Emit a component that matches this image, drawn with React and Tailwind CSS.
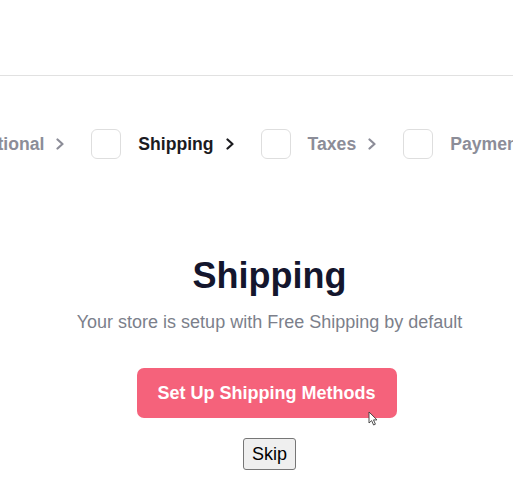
import React from "react";

const steps = [
  { label: "Optional", active: false },
  { label: "Shipping", active: true },
  { label: "Taxes", active: false },
  { label: "Payments", active: false },
];

const Chevron = ({ active }) => (
  <svg width="8" height="12" viewBox="0 0 8 12" fill="none" className="shrink-0">
    <path
      d="M1.5 1.5 L6.5 6 L1.5 10.5"
      stroke={active ? "#1b1b1f" : "#8c8d98"}
      strokeWidth="2.2"
      strokeLinecap="round"
      strokeLinejoin="round"
    />
  </svg>
);

const App = () => {
  return (
    <div className="min-h-screen bg-white overflow-hidden font-['Liberation_Sans',Arial,sans-serif]">
      <div className="h-[76px] border-b border-[#e1e1e1]" />

      {/* step bar */}
      <div className="mt-[53px] overflow-hidden">
        <div className="flex items-center whitespace-nowrap ml-[-74px]">
          {steps.map((step, i) => (
            <div key={step.label} className="flex items-center shrink-0">
              <div className="w-[30px] h-[30px] rounded-[6px] border border-[#dedede] bg-white shrink-0" />
              <span
                className={`ml-[17px] text-[17.6px] font-bold ${
                  step.active ? "text-[#1b1b1f]" : "text-[#8c8d98]"
                }`}
              >
                {step.label}
              </span>
              {i < steps.length - 1 && (
                <>
                  <span className="ml-[12px]">
                    <Chevron active={step.active} />
                  </span>
                  <span className="w-[27px]" />
                </>
              )}
            </div>
          ))}
        </div>
      </div>

      <div className="flex flex-col items-center pl-[26px]">
        <h1 className="mt-[97px] text-[36px] leading-[40px] font-bold text-[#14162d]">Shipping</h1>
        <p className="mt-[14px] text-[18px] leading-[24px] text-[#7c7f8b]">
          Your store is setup with Free Shipping by default
        </p>
        <div className="relative mt-[34px] mr-[6px]">
          <button className="h-[50px] w-[260px] rounded-[7px] bg-[#f5627b] text-white text-[18px] font-bold">
            Set Up Shipping Methods
          </button>
          {/* mouse pointer */}
          <svg
            width="11"
            height="15"
            viewBox="0 0 11 15"
            className="absolute left-[231px] top-[43px] pointer-events-none"
          >
            <path
              d="M1 1 L1 12 L3.6 9.6 L5.6 14 L7.4 13.2 L5.5 8.9 L9 8.9 Z"
              fill="#ffffff"
              stroke="#3a3a3a"
              strokeWidth="0.9"
              strokeLinejoin="round"
            />
          </svg>
        </div>
        <button className="mt-[20px] h-[32px] px-[8px] rounded-[3px] border border-[#767676] bg-[#efefef] text-[18px] text-black">
          Skip
        </button>
      </div>
    </div>
  );
};

export default App;
